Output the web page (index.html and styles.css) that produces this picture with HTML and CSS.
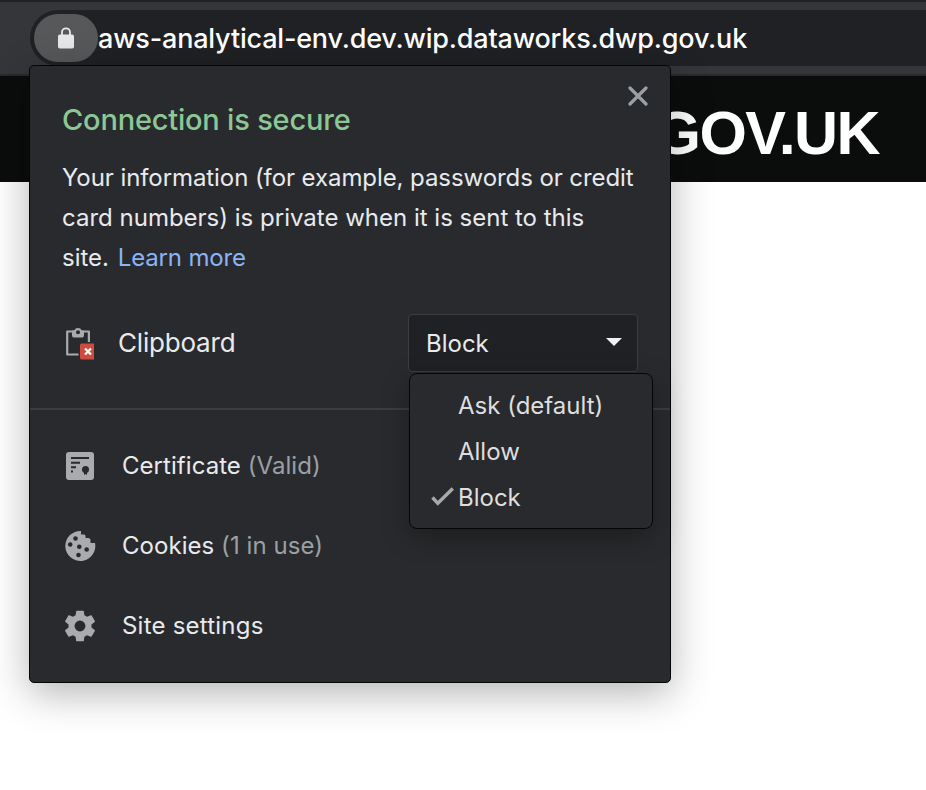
FILE: index.html
```
<!DOCTYPE html>
<html lang="en">
<head>
<meta charset="utf-8">
<title>Site information</title>
<link rel="stylesheet" href="styles.css">
</head>
<body>
<div class="toolbar">
  <div class="omnibox">
    <div class="lock"><svg width="18" height="22" viewBox="0 0 18 22"><rect x="1" y="7.5" width="16" height="14" rx="1.8" fill="#e8e8e8"/><path d="M5 8V5.3a4 4 0 0 1 8 0V8" fill="none" stroke="#e8e8e8" stroke-width="1.8"/></svg></div>
    <span class="url">aws-analytical-env.dev.wip.dataworks.dwp.gov.uk</span>
  </div>
</div>
<header class="banner"><span class="brand">GOV.UK</span></header>

<section class="popup">
  <button class="close" aria-label="Close"><svg width="20" height="20" viewBox="0 0 20 20"><path d="M2 2 18 18M18 2 2 18" stroke="#9aa0a6" stroke-width="3.2" stroke-linecap="round"/></svg></button>
  <h1 class="title">Connection is secure</h1>
  <p class="summary"><span class="first">Your information (for example, passwords or credit</span><br>card numbers) is private when it is sent to this<br>site. <a class="link">Learn more</a></p>
  <div class="permission">
    <svg class="clip" width="34" height="34" viewBox="0 0 34 34"><path d="M16.500 28.500H5.200V5.500H26.900V16" fill="none" stroke="#a9abae" stroke-width="2.200" stroke-linejoin="round"/><path d="M10 4.500h2.200a4.200 4.200 0 0 1 7.600 0H22V9a2.600 2.600 0 0 1-2.600 2.600h-6.800A2.600 2.600 0 0 1 10 9z" fill="#a9abae"/><circle cx="16" cy="6.200" r="2" fill="#292a2d"/><path d="M19.500 17.500H32v16H19.500a1.500 1.500 0 0 1-1.500-1.500v-13a1.500 1.500 0 0 1 1.500-1.500z" fill="#cd4b3f"/><path d="m23 22.500 6 6m0-6-6 6" stroke="#fff" stroke-width="2.200"/></svg>
    <span class="name">Clipboard</span>
    <div class="select"><span>Block</span><svg class="arrow" width="16" height="8" viewBox="0 0 16 8"><path d="M0 0h16L8 8z" fill="#f1f1f3"/></svg>
      <ul class="menu">
        <li>Ask (default)</li>
        <li>Allow</li>
        <li><svg class="check" width="24" height="20" viewBox="0 0 24 20"><path d="m2.500 10.500 5.300 5.800L22.800 1.500" fill="none" stroke="#a9a9aa" stroke-width="3.400"/></svg>Block</li>
      </ul>
    </div>
  </div>
  <nav class="rows">
    <div class="row">
      <svg width="32" height="32" viewBox="0 0 32 32"><rect x="2" y="2" width="28" height="28" rx="3" fill="#a9abae"/><path d="M7 8h18M7 12.700h9M7 17.200h5M7 21.600h2" stroke="#292a2d" stroke-width="2"/><circle cx="21.500" cy="19.500" r="3.500" fill="#292a2d"/><path d="M20 21h3v4l-1.500-1-1.500 1z" fill="#292a2d"/></svg>
      <span>Certificate <em>(Valid)</em></span>
    </div>
    <div class="row">
      <svg width="32" height="32" viewBox="0 0 32 32"><path d="M17 1a15 15 0 1 0 14 12h-4.500v-2.500A2.500 2.500 0 0 0 24 8h-2.500V6A1.500 1.500 0 0 0 20 4.500h-3z" fill="#a9abae"/><g fill="#292a2d"><circle cx="11.500" cy="8.500" r="2.300"/><circle cx="6.200" cy="14.500" r="2.300"/><circle cx="15.300" cy="16.800" r="2.300"/><circle cx="22.700" cy="19.500" r="2.300"/><circle cx="14.500" cy="25" r="2.300"/></g></svg>
      <span>Cookies <em>(1 in use)</em></span>
    </div>
    <div class="row">
      <svg width="32" height="32" viewBox="2 2 20 20"><path fill="#a9abae" fill-rule="evenodd" d="M19.140 12.940c.04-.3.06-.61.06-.94 0-.32-.02-.64-.07-.94l2.030-1.580c.18-.14.23-.41.12-.61l-1.920-3.320c-.12-.22-.37-.29-.59-.22l-2.390.96c-.5-.38-1.030-.7-1.620-.94L14.400 2.810c-.04-.24-.24-.41-.48-.41h-3.840c-.24 0-.43.17-.47.41L9.250 5.350c-.59.24-1.130.57-1.620.94l-2.390-.96c-.22-.08-.47 0-.59.22L2.740 8.870c-.12.21-.08.47.12.61l2.030 1.580c-.05.3-.09.63-.09.94s.02.64.07.94l-2.030 1.580c-.18.14-.23.41-.12.61l1.920 3.320c.12.22.37.29.59.22l2.390-.96c.5.38 1.030.7 1.620.94l.36 2.540c.05.24.24.41.48.41h3.840c.24 0 .44-.17.47-.41l.36-2.540c.59-.24 1.130-.56 1.620-.94l2.390.96c.22.08.47 0 .59-.22l1.920-3.320c.12-.22.07-.47-.12-.61zM12 15.400A3.400 3.400 0 1 1 12 8.600a3.400 3.400 0 0 1 0 6.800z"/></svg>
      <span class="settings">Site settings</span>
    </div>
  </nav>
</section>
</body>
</html>
```
FILE: styles.css
```
* { box-sizing: border-box; }
body {
  margin: 0;
  height: 790px;
  position: relative;
  overflow: hidden;
  background: #fff;
  font-family: Inter, "Liberation Sans", sans-serif;
}
.toolbar {
  height: 76px;
  padding: 8px 0 0 30px;
  background: #35363a;
  border-top: 2px solid #202124;
  border-bottom: 2px solid #292a2c;
}
.omnibox {
  display: flex;
  align-items: center;
  height: 56px;
  padding-left: 4px;
  background: #202124;
  border-radius: 28px 0 0 28px;
}
.lock {
  display: flex;
  align-items: center;
  justify-content: center;
  width: 64px;
  height: 48px;
  border-radius: 24px;
  background: #57585a;
}
.url {
  padding-top: 1px;
  color: #fff;
  font-size: 27px;
  font-weight: 450;
  letter-spacing: -.19px;
  line-height: 55px;
  white-space: nowrap;
}
.banner {
  display: flex;
  align-items: center;
  justify-content: flex-end;
  height: 106px;
  padding: 8px 47px 0 0;
  background: #0b0c0c;
}
.brand {
  color: #fff;
  font: bold 61px/62px "Liberation Sans", sans-serif;
  letter-spacing: -1.6px;
  white-space: nowrap;
}
.popup {
  position: absolute;
  left: 29px;
  top: 65px;
  width: 642px;
  height: 618px;
  padding: 34px 0 16px;
  border: 1px solid #050506;
  border-radius: 5px;
  background: #292a2d;
  color: #e8eaed;
  font-size: 24px;
  box-shadow: 0 10px 40px rgba(0, 0, 0, .3);
}
.close {
  position: absolute;
  right: 22px;
  top: 20px;
  display: flex;
  padding: 0;
  border: 0;
  background: none;
}
.title {
  margin: 0 32px;
  color: #8bc895;
  font-size: 29px;
  font-weight: 450;
  letter-spacing: -.2px;
  line-height: 40px;
}
.summary {
  margin: 18px 0 0 32px;
  line-height: 40px;
  white-space: nowrap;
}
.first { letter-spacing: -.08px; }
.link {
  margin-left: 2px;
  color: #8ab4f8;
  letter-spacing: -.15px;
}
.permission {
  display: flex;
  align-items: center;
  height: 58px;
  margin-top: 36px;
  padding: 0 32px;
}
.name {
  margin-left: 22px;
  padding-bottom: 2px;
  font-size: 26px;
  letter-spacing: -.2px;
}
.select {
  position: relative;
  display: flex;
  align-items: center;
  justify-content: space-between;
  width: 230px;
  height: 58px;
  margin-left: auto;
  padding: 0 15px 0 17px;
  border: 1px solid #3c3d41;
  border-radius: 4px;
  background: #202124;
}
.arrow { margin-bottom: 2px; }
.menu {
  position: absolute;
  left: 0;
  top: 58px;
  width: 244px;
  height: 156px;
  margin: 0;
  padding: 9px 0 0 48px;
  border: 1px solid #050506;
  border-radius: 8px;
  background: #292a2d;
  color: #dededf;
  list-style: none;
  box-shadow: 0 8px 28px rgba(0, 0, 0, .3);
}
.menu li { position: relative; line-height: 46px; }
.check {
  position: absolute;
  left: -28px;
  top: 12px;
}
.rows {
  margin-top: 36px;
  padding: 16px 34px 0;
  border-top: 2px solid #3c3d40;
}
.row {
  display: flex;
  align-items: center;
  gap: 26px;
  height: 80px;
}
.row span { padding-bottom: 2px; letter-spacing: .05px; }
.row .settings { letter-spacing: .22px; }
.row em { color: #9aa0a6; font-style: normal; }
```
